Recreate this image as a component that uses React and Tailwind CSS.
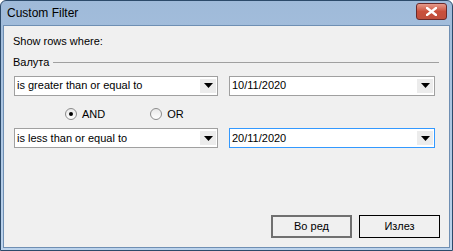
import React from 'react';

const FONT = { fontFamily: '"Liberation Sans", Arial, sans-serif' };

function Arrow() {
  return (
    <svg width="9" height="5" viewBox="0 0 9 5">
      <path d="M0 0 H9 L4.5 5 Z" fill="#000" />
    </svg>
  );
}

function Combo({ value, className = '', focused = false }) {
  return (
    <div
      className={`flex h-[20px] items-stretch bg-white border ${
        focused ? 'border-[#3399ff]' : 'border-[#a0a0a0]'
      } ${className}`}
    >
      <div className="flex flex-1 items-center pl-[2px] text-[11px] text-black">{value}</div>
      <div className="my-[2px] mr-[1px] flex w-[16px] items-center justify-center bg-[#ececec]">
        <Arrow />
      </div>
    </div>
  );
}

function Radio({ label, checked }) {
  return (
    <div className="flex items-center gap-[5px]">
      <span className="flex h-[12px] w-[12px] items-center justify-center rounded-full border border-[#8c8c8c] bg-gradient-to-b from-[#e8e8e8] to-white">
        {checked && <span className="h-[4px] w-[4px] rounded-full bg-black" />}
      </span>
      <span className="text-[11px] text-black">{label}</span>
    </div>
  );
}

export default function App() {
  return (
    <div className="h-[251px] w-[453px] bg-white" style={FONT}>
      <div className="flex h-full w-full flex-col rounded-t-[6px] border border-[#2c4a6a] bg-gradient-to-b from-[#9fbad9] to-[#bcd3ec]">
        {/* Title bar */}
        <div className="flex h-[24px] items-center justify-between pl-[6px] pr-[5px]">
          <span className="text-[12px] text-black">Custom Filter</span>
          <div className="mt-[-3px] flex h-[17px] w-[31px] items-center justify-center rounded-[3px] border border-[#6a2a2a] bg-gradient-to-b from-[#e59a8c] via-[#c9503c] to-[#c0503e]">
            <svg width="11" height="9" viewBox="0 0 11 9">
              <path d="M1 1 L10 8 M10 1 L1 8" stroke="#fff" strokeWidth="2.4" strokeLinecap="square" />
            </svg>
          </div>
        </div>

        {/* Client area */}
        <div className="mx-[2px] mb-[2px] flex flex-1 flex-col border border-[#6f8fb3] bg-[#f0f0f0] px-[9px] pt-[9px] text-black">
          <div className="text-[11px] leading-[13px]">Show rows where:</div>

          <div className="mt-[6px] flex items-center gap-[4px]">
            <span className="text-[11px]">Валута</span>
            <div className="h-0 flex-1 border-t border-[#a0a0a0] border-b-white mr-[1px]" />
          </div>

          <div className="mt-[5px] flex gap-[11px] pl-[1px]">
            <Combo value="is greater than or equal to" className="w-[204px]" />
            <Combo value="10/11/2020" className="w-[206px]" />
          </div>

          <div className="mt-[10px] flex gap-[45px] pl-[52px]">
            <Radio label="AND" checked />
            <Radio label="OR" />
          </div>

          <div className="mt-[6px] flex gap-[11px] pl-[1px]">
            <Combo value="is less than or equal to" className="w-[204px]" />
            <Combo value="20/11/2020" className="w-[206px]" focused />
          </div>

          <div className="mt-[67px] flex justify-end gap-[7px] pr-0">
            <button className="h-[23px] w-[81px] border-2 border-[#707070] bg-[#f0f0f0] text-[11px]">Во ред</button>
            <button className="h-[23px] w-[81px] border border-black bg-[#f0f0f0] text-[11px]">Излез</button>
          </div>
        </div>
      </div>
    </div>
  );
}
